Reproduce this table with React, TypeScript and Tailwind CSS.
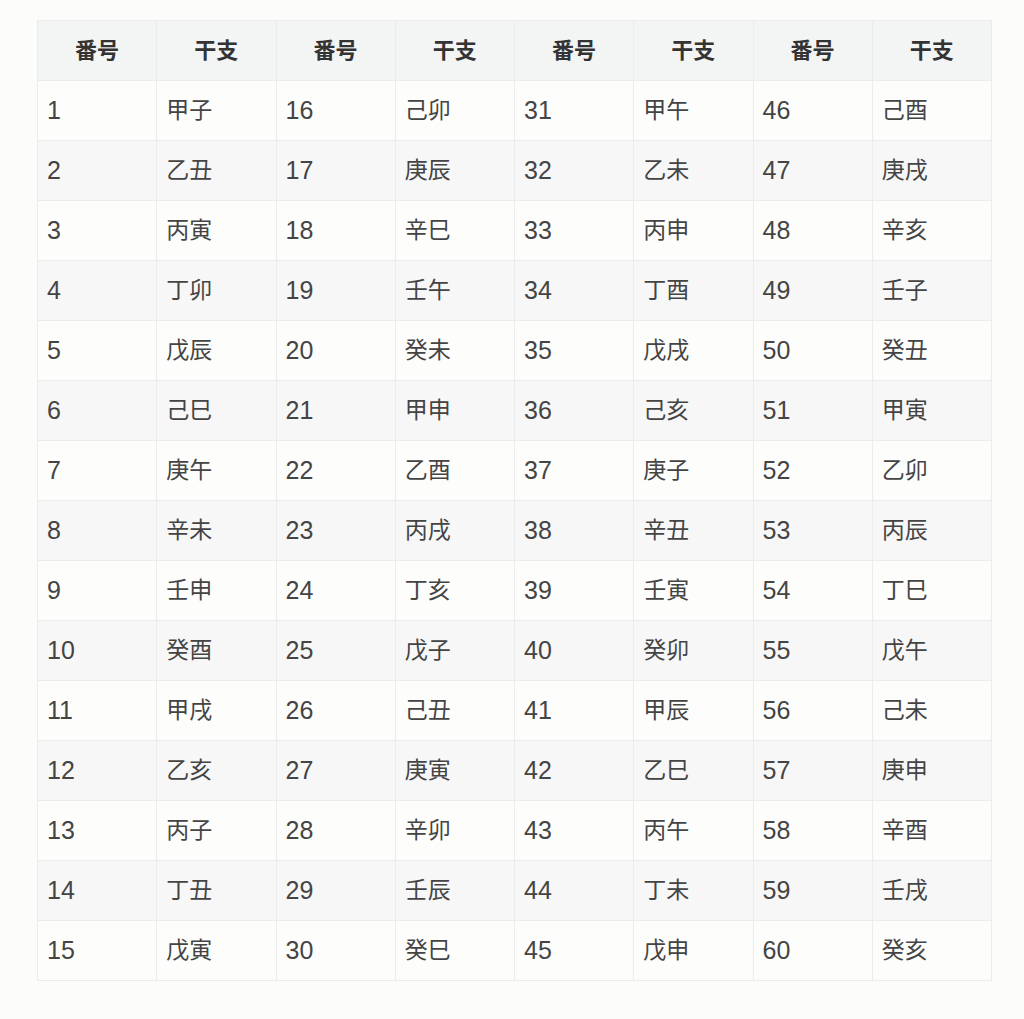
import React from 'react';

const STEMS = ['甲', '乙', '丙', '丁', '戊', '己', '庚', '辛', '壬', '癸'];
const BRANCHES = ['子', '丑', '寅', '卯', '辰', '巳', '午', '未', '申', '酉', '戌', '亥'];

const ganzhi = (n: number) => STEMS[(n - 1) % 10] + BRANCHES[(n - 1) % 12];

const App = () => {
  const rows = Array.from({ length: 15 }, (_, i) => i + 1);

  return (
    <div className="min-h-[1019px] bg-[#fcfcfa] pt-[20px] pl-[37px]">
      <table
        className="w-[955px] table-fixed border-collapse text-[#444]"
        style={{ fontFamily: '"Liberation Sans", "Noto Sans CJK JP", sans-serif' }}
      >
        <thead>
          <tr className="h-[60px] bg-[#f3f5f5]">
            {[0, 1, 2, 3].map((g) => (
              <React.Fragment key={g}>
                <th className="border border-[#ececec] text-center text-[22px] font-bold text-[#333]">番号</th>
                <th className="border border-[#ececec] text-center text-[22px] font-bold text-[#333]">干支</th>
              </React.Fragment>
            ))}
          </tr>
        </thead>
        <tbody>
          {rows.map((r) => (
            <tr key={r} className={r % 2 === 0 ? 'h-[60px] bg-[#f7f7f7]' : 'h-[60px] bg-[#fdfdfc]'}>
              {[0, 15, 30, 45].map((off) => (
                <React.Fragment key={off}>
                  <td className="border border-[#ececec] pl-[9px] text-[25px]">{r + off}</td>
                  <td className="border border-[#ececec] pl-[9px] text-[23px]">{ganzhi(r + off)}</td>
                </React.Fragment>
              ))}
            </tr>
          ))}
        </tbody>
      </table>
    </div>
  );
};

export default App;
